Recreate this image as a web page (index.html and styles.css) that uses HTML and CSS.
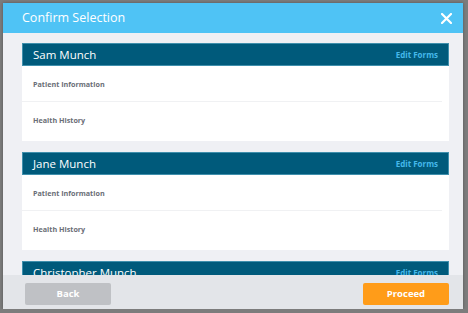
FILE: index.html
```html
<!DOCTYPE html>
<html lang="en">
<head>
<meta charset="UTF-8">
<meta name="viewport" content="width=device-width, initial-scale=1.0">
<title>Confirm Selection</title>
<link rel="stylesheet" href="styles.css">
</head>
<body>

<div class="modal">
  <header class="modal-header">
    <h1>Confirm Selection</h1>
    <button class="close" aria-label="Close">
      <svg width="11" height="11" viewBox="0 0 11 11"><path d="M1 1L10 10M10 1L1 10" stroke="#fff" stroke-width="2.2" stroke-linecap="round"/></svg>
    </button>
  </header>

  <div class="modal-body">
    <section class="patient">
      <div class="patient-bar">
        <span class="name">Sam Munch</span>
        <a class="edit" href="#">Edit Forms</a>
      </div>
      <ul class="forms">
        <li class="form-row">Patient Information</li>
        <li class="form-row">Health History</li>
      </ul>
    </section>

    <section class="patient">
      <div class="patient-bar">
        <span class="name">Jane Munch</span>
        <a class="edit" href="#">Edit Forms</a>
      </div>
      <ul class="forms">
        <li class="form-row">Patient Information</li>
        <li class="form-row">Health History</li>
      </ul>
    </section>

    <section class="patient">
      <div class="patient-bar">
        <span class="name">Christopher Munch</span>
        <a class="edit" href="#">Edit Forms</a>
      </div>
      <ul class="forms">
        <li class="form-row">Patient Information</li>
        <li class="form-row">Health History</li>
      </ul>
    </section>
  </div>

  <footer class="modal-footer">
    <button class="btn btn-back">Back</button>
    <button class="btn btn-proceed">Proceed</button>
  </footer>
</div>

</body>
</html>
```

FILE: styles.css
```css
body {
  margin: 0;
  padding: 3px 0 0 3px;
  background-color: #7c7c7c;
  font-family: "Open Sans", Arial, sans-serif;
  overflow: hidden;
}
.modal {
  width: 460px;
  height: 306px;
  background-color: #eff0f4;
  display: flex;
  flex-direction: column;
  box-shadow: 0 0 3px rgba(0, 0, 0, 0.3);
}
.modal-header {
  height: 30px;
  flex: none;
  background-color: #4fc3f5;
  display: flex;
  align-items: center;
  justify-content: space-between;
  padding: 0 11px 0 19px;
}
.modal-header h1 {
  margin: 0 0 2px 0;
  font-size: 12.5px;
  font-weight: 400;
  color: #fff;
}
.close {
  border: 0;
  background: none;
  padding: 0;
  width: 11px;
  height: 11px;
  display: flex;
}
.modal-body {
  flex: 1;
  overflow: hidden;
  padding: 10px 14px 0 19px;
}
.patient {
  margin-bottom: 11px;
}
.patient-bar {
  height: 21px;
  background-color: #005a7b;
  border: 1px solid #3f8fac;
  display: flex;
  align-items: center;
  justify-content: space-between;
  padding: 0 10px;
}
.name {
  color: #fff;
  font-size: 11.5px;
}
.edit {
  color: #45b8ea;
  font-size: 8px;
  font-weight: 700;
  text-decoration: none;
}
.forms {
  list-style-type: none;
  margin: 0;
  padding: 0 0 3px 0;
  background-color: #fff;
}
.form-row {
  height: 36px;
  display: flex;
  align-items: center;
  padding-left: 11px;
  font-size: 7.2px;
  font-weight: 700;
  color: #6a6e76;
}
.form-row:first-child {
  border-bottom: 1px solid #f0f1f3;
  height: 35px;
  margin-right: 7px;
}
.modal-footer {
  height: 34px;
  flex: none;
  background-color: #e3e5e9;
  display: flex;
  justify-content: space-between;
  padding: 8px 14px 0 22px;
  box-sizing: border-box;
}
.btn {
  width: 86px;
  height: 22px;
  padding: 0;
  border: 0;
  border-radius: 2px;
  color: #fff;
  font-family: "Open Sans", Arial, sans-serif;
  font-size: 9.5px;
  font-weight: 700;
  line-height: 22px;
}
.btn-back {
  background-color: #bfc1c5;
}
.btn-proceed {
  background-color: #ff9c19;
}
```
